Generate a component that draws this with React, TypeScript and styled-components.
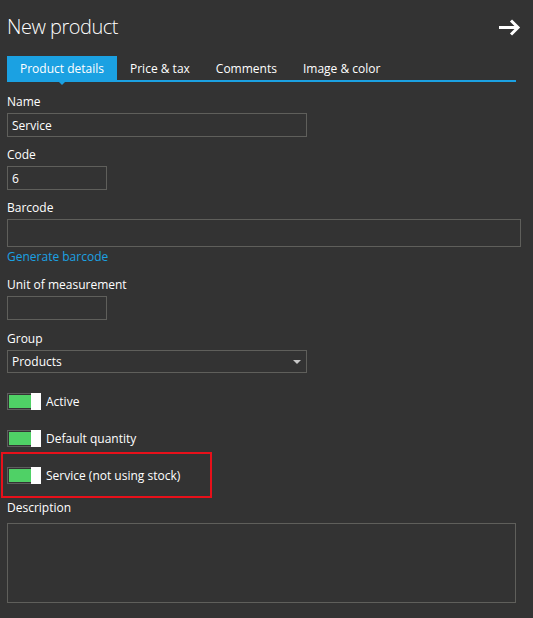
import React from 'react';
import styled, { createGlobalStyle } from 'styled-components';

const GlobalStyle = createGlobalStyle`
  html,
  body {
    margin: 0;
    padding: 0;
    background: #333333;
  }

  body {
    font-family: 'Open Sans', 'Noto Sans', sans-serif;
    color: #ffffff;
  }

  * {
    box-sizing: border-box;
  }
`;

const accent = '#1ba1e2';
const border = '#5f5f5b';

const Page = styled.div`
  width: 533px;
  height: 618px;
  padding: 13px 0 0 7px;
  background: #333333;
  overflow: hidden;
`;

const Header = styled.header`
  display: flex;
  align-items: center;
  justify-content: space-between;
  width: 514px;
  height: 28px;
`;

const Title = styled.h1`
  margin: 0;
  font-size: 20px;
  font-weight: 300;
  line-height: 28px;
  letter-spacing: -0.5px;
  color: #ffffff;
`;

const NextButton = styled.button`
  display: flex;
  padding: 0;
  border: 0;
  background: none;
  cursor: pointer;
`;

const TabBar = styled.nav`
  display: flex;
  width: 509px;
  margin-top: 15px;
  border-bottom: 2px solid ${accent};
`;

const Tab = styled.div<{ $active?: boolean }>`
  position: relative;
  height: 24px;
  padding: 1px 13px 0;
  font-size: 12px;
  line-height: 24px;
  color: #ffffff;
  background: ${({ $active }) => ($active ? accent : 'transparent')};

  ${({ $active }) =>
    $active &&
    `
    &::after {
      content: '';
      position: absolute;
      left: 50%;
      bottom: -5px;
      transform: translateX(-50%);
      border-left: 3px solid transparent;
      border-right: 3px solid transparent;
      border-top: 3px solid ${accent};
    }
  `}
`;

const Form = styled.form`
  display: flex;
  flex-direction: column;
  margin-top: 12px;
`;

const Field = styled.div<{ $mb?: number }>`
  display: flex;
  flex-direction: column;
  margin-bottom: ${({ $mb }) => $mb ?? 10}px;
`;

const Label = styled.label<{ $gap?: number }>`
  font-size: 12px;
  line-height: 16px;
  color: #ffffff;
  margin-bottom: ${({ $gap }) => $gap ?? 3}px;
`;

const TextInput = styled.input<{ $w: number; $h?: number }>`
  width: ${({ $w }) => $w}px;
  height: ${({ $h }) => $h ?? 24}px;
  margin: 0;
  padding: 0 4px;
  border: 1px solid ${border};
  background: transparent;
  color: #ffffff;
  font-family: inherit;
  font-size: 12px;
  outline: none;
`;

const TextArea = styled.textarea`
  width: 509px;
  height: 80px;
  margin: 0;
  padding: 4px;
  border: 1px solid ${border};
  background: transparent;
  color: #ffffff;
  font-family: inherit;
  font-size: 12px;
  resize: none;
  outline: none;
`;

const LinkButton = styled.a`
  margin-top: 2px;
  font-size: 12px;
  line-height: 16px;
  color: ${accent};
  text-decoration: none;
  cursor: pointer;
`;

const Select = styled.div`
  display: flex;
  align-items: center;
  justify-content: space-between;
  width: 300px;
  height: 23px;
  padding: 0 5px 0 4px;
  border: 1px solid ${border};
  font-size: 12px;
  color: #ffffff;
`;

const Caret = styled.span`
  width: 0;
  height: 0;
  margin-top: 1px;
  border-left: 4px solid transparent;
  border-right: 4px solid transparent;
  border-top: 4px solid #c8c8c8;
`;

const Toggles = styled.div`
  display: flex;
  flex-direction: column;
`;

const ToggleRow = styled.div<{ $highlighted?: boolean }>`
  display: flex;
  align-items: center;
  gap: 5px;
  ${({ $highlighted }) =>
    $highlighted
      ? `
    width: 211px;
    margin: 5px 0 0 -6px;
    padding: 13px 4px 12px;
    border: 2px solid #e8101a;
  `
      : `
    margin-top: 20px;
  `}
`;

const Toggle = styled.span`
  position: relative;
  display: inline-block;
  flex: none;
  width: 34px;
  height: 17px;
  padding: 1px;
  border: 1px solid #5e5e5e;

  &::before {
    content: '';
    display: block;
    width: 22px;
    height: 13px;
    background: #4fd166;
  }

  &::after {
    content: '';
    position: absolute;
    top: -1px;
    right: -1px;
    bottom: -1px;
    width: 10px;
    background: #ffffff;
  }
`;

const ToggleText = styled.span`
  font-size: 12px;
  line-height: 16px;
  color: #ffffff;
`;

const DescriptionField = styled(Field)`
  margin-top: 2px;
`;

const ArrowIcon = () => (
  <svg width="22" height="17" viewBox="0 0 22 17" fill="none">
    <path d="M0 8.5H19" stroke="#fff" strokeWidth="3" />
    <path d="M12 1.5L19 8.5L12 15.5" stroke="#fff" strokeWidth="3" />
  </svg>
);

const toggles = ['Active', 'Default quantity', 'Service (not using stock)'];

export default function App() {
  return (
    <>
      <GlobalStyle />
      <Page>
        <Header>
          <Title>New product</Title>
          <NextButton aria-label="Next">
            <ArrowIcon />
          </NextButton>
        </Header>

        <TabBar>
          <Tab $active>Product details</Tab>
          <Tab>Price &amp; tax</Tab>
          <Tab>Comments</Tab>
          <Tab>Image &amp; color</Tab>
        </TabBar>

        <Form onSubmit={(e) => e.preventDefault()}>
          <Field>
            <Label>Name</Label>
            <TextInput $w={300} defaultValue="Service" />
          </Field>
          <Field>
            <Label>Code</Label>
            <TextInput $w={100} defaultValue="6" />
          </Field>
          <Field $mb={12}>
            <Label>Barcode</Label>
            <TextInput $w={514} $h={28} />
            <LinkButton>Generate barcode</LinkButton>
          </Field>
          <Field $mb={11}>
            <Label>Unit of measurement</Label>
            <TextInput $w={100} />
          </Field>
          <Field $mb={0}>
            <Label>Group</Label>
            <Select>
              <span>Products</span>
              <Caret />
            </Select>
          </Field>

          <Toggles>
            {toggles.map((t, i) => (
              <ToggleRow key={t} $highlighted={i === 2}>
                <Toggle role="switch" aria-checked="true" />
                <ToggleText>{t}</ToggleText>
              </ToggleRow>
            ))}
          </Toggles>

          <DescriptionField $mb={0}>
            <Label $gap={7}>Description</Label>
            <TextArea />
          </DescriptionField>
        </Form>
      </Page>
    </>
  );
}
